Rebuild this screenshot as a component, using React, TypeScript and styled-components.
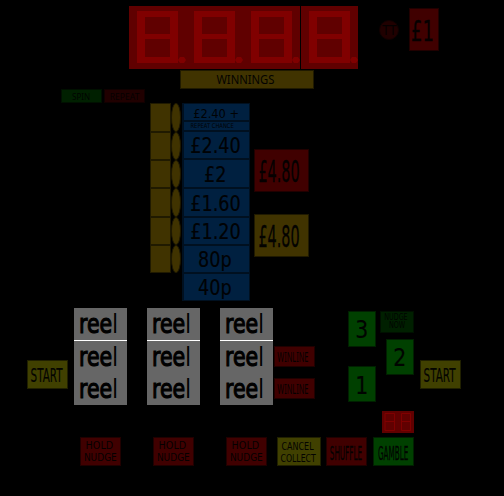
import React from "react";
import styled, { createGlobalStyle } from "styled-components";

const Global = createGlobalStyle`
  html, body { margin: 0; background: #000; }
  * { box-sizing: border-box; }
`;

const tones = {
  red: ["#400000", "#200000", "#050000"],
  dimRed: ["#200000", "#100000", "#050000"],
  gold: ["#403300", "#201a00", "#040300"],
  yellow: ["#404000", "#202000", "#040400"],
  green: ["#004000", "#002000", "#000400"],
  dimGreen: ["#002000", "#001000", "#000400"],
  blue: ["#002040", "#001020", "#000204"],
};
type Tone = keyof typeof tones;

const Machine = styled.main`
  width: 504px;
  height: 496px;
  overflow: hidden;
  background: #000;
  display: flex;
  flex-direction: column;
  font-family: "DejaVu Sans", sans-serif;
`;

const Row = styled.div<{ $left?: number; $top?: number; $gap?: number; $h?: number }>`
  display: flex;
  flex: none;
  align-items: flex-start;
  margin-left: ${(p) => p.$left ?? 0}px;
  margin-top: ${(p) => p.$top ?? 0}px;
  gap: ${(p) => p.$gap ?? 0}px;
  ${(p) => p.$h && `height: ${p.$h}px;`}
`;

const Column = styled(Row)`
  flex-direction: column;
`;

const Lamp = styled.div<{ $tone: Tone; $w: number; $h: number }>`
  flex: none;
  display: flex;
  flex-direction: column;
  align-items: center;
  justify-content: center;
  width: ${(p) => p.$w}px;
  height: ${(p) => p.$h}px;
  color: ${(p) => tones[p.$tone][2]};
  background: ${(p) => tones[p.$tone][0]};
  border: 1px solid ${(p) => tones[p.$tone][1]};
`;

const RoundLamp = styled(Lamp)`
  border-radius: 50%;
`;

const PrizeLamp = styled(Lamp)`
  border-left-width: 2px;
`;

const Label = styled.span<{ $size: number; $sx?: number; $lh?: number; $noto?: boolean; $pad?: string; $bold?: number }>`
  flex: none;
  white-space: nowrap;
  font-size: ${(p) => p.$size}px;
  line-height: ${(p) => p.$lh ?? p.$size}px;
  padding: ${(p) => p.$pad ?? "0"};
  transform: scaleX(${(p) => p.$sx ?? 1});
  ${(p) => p.$noto && `font-family: "Noto Sans", sans-serif;`}
  ${(p) => p.$bold && `-webkit-text-stroke: ${p.$bold}px currentColor;`}
`;

const Readout = styled.div`
  display: flex;
  width: 229px;
  height: 63px;
`;

const DigitCell = styled.svg`
  display: block;
  flex: none;
  background: #600000;
  &:last-child { margin-left: 1px; }
`;

const Counter = styled.svg`
  display: block;
  flex: none;
  background: #600000;
`;

const Reel = styled.div`
  width: 53px;
  height: 97px;
  background: #666;
  color: #000;
  display: flex;
  flex-direction: column;
`;

const Symbol = styled.div<{ $line?: boolean }>`
  height: ${(p) => (p.$line ? 33 : 32)}px;
  border-bottom: ${(p) => (p.$line ? "1px solid #fff" : "none")};
  padding-left: 5px;
  font-size: 27px;
  line-height: 32px;
  white-space: nowrap;
`;

const Word = styled.span`
  display: inline-block;
  transform: scaleX(0.76);
  transform-origin: left;
`;

const Heavy = styled.span`
  -webkit-text-stroke: 1.2px #000;
`;

const Digit = () => (
  <DigitCell width="57" height="63" viewBox="0 0 57 63">
    <path d="M8 5H49V57H8ZM16 11V28H41V11ZM16 33V51H41V33Z" fill="#800000" fillRule="evenodd" />
    <path d="M49 54l2-3h4l2 3l-2 3h-4z" fill="#800000" />
  </DigitCell>
);

const ReelStrip = () => (
  <Reel>
    {[true, false, false].map((line, i) => (
      <Symbol key={i} $line={line}>
        <Word><Heavy>ree</Heavy>l</Word>
      </Symbol>
    ))}
  </Reel>
);

const Start = () => (
  <Lamp $tone="yellow" $w={41} $h={29}>
    <Label $size={20} $sx={0.52} $pad="0 3px 0 0" $bold={0.2}>START</Label>
  </Lamp>
);

const Hold = () => (
  <Lamp $tone="red" $w={41} $h={29}>
    <Label $size={10} $lh={12} $sx={0.96} $pad="1px 2px 0 0">HOLD</Label>
    <Label $size={10} $lh={12} $sx={0.9} $pad="0 1px 0 0">NUDGE</Label>
  </Lamp>
);

const prizes: [string, number][] = [
  ["£2.40", 28], ["£2", 29], ["£1.60", 29], ["£1.20", 28], ["80p", 28], ["40p", 28],
];

export default function App() {
  return (
    <Machine>
      <Global />
      <Row $left={129} $top={6} $h={64}>
        <Readout><Digit /><Digit /><Digit /><Digit /></Readout>
        <Column $left={21} $top={14}>
          <RoundLamp $tone="dimRed" $w={20} $h={20}>
            <Label $size={14} $sx={0.85}>TT</Label>
          </RoundLamp>
        </Column>
        <Column $left={10} $top={2}>
          <Lamp $tone="red" $w={30} $h={43}>
            <Label $size={29} $sx={0.62} $pad="3px 5px 0 0" $bold={0.3}>£1</Label>
          </Lamp>
        </Column>
      </Row>

      <Row $left={180}>
        <Lamp $tone="gold" $w={134} $h={19}>
          <Label $size={12.5} $sx={0.9} $noto $pad="1px 3px 0 0">WINNINGS</Label>
        </Lamp>
      </Row>

      <Row $left={61} $gap={2}>
        <Lamp $tone="dimGreen" $w={41} $h={14}><Label $size={9} $sx={0.9} $noto>SPIN</Label></Lamp>
        <Lamp $tone="dimRed" $w={41} $h={14}><Label $size={9} $sx={0.95} $noto>REPEAT</Label></Lamp>
      </Row>

      <Row $left={150} $h={198}>
        <Column>
          {[29, 28, 28, 29, 28, 28].map((h, i) => <Lamp key={i} $tone="gold" $w={21} $h={h} />)}
        </Column>
        <Column>
          {[29, 28, 28, 29, 28, 28].map((h, i) => <RoundLamp key={i} $tone="gold" $w={10} $h={h} />)}
        </Column>
        <Column $left={1}>
          <PrizeLamp $tone="blue" $w={68} $h={18}><Label $size={13} $sx={0.88} $pad="2px 0 0">£2.40 +</Label></PrizeLamp>
          <PrizeLamp $tone="blue" $w={68} $h={10}><Label $size={6.5} $sx={0.8} $pad="0 11px 0 0">REPEAT CHANCE</Label></PrizeLamp>
          {prizes.map(([text, h]) => (
            <PrizeLamp key={text} $tone="blue" $w={68} $h={h}>
              <Label $size={20.5} $sx={0.86} $pad="3px 3px 0 0" $bold={0.2}>{text}</Label>
            </PrizeLamp>
          ))}
        </Column>
        <Column $left={4} $top={46} $gap={22}>
          <Lamp $tone="red" $w={55} $h={43}><Label $size={30} $sx={0.48} $pad="2px 12px 0 0" $bold={0.3}>£4.80</Label></Lamp>
          <Lamp $tone="gold" $w={55} $h={43}><Label $size={30} $sx={0.48} $pad="2px 12px 0 0" $bold={0.3}>£4.80</Label></Lamp>
        </Column>
      </Row>

      <Row $top={7} $h={103}>
        <Column $left={27} $top={52}><Start /></Column>
        <Row $left={6} $gap={20}><ReelStrip /><ReelStrip /><ReelStrip /></Row>
        <Column $left={1} $top={38} $gap={11}>
          <Lamp $tone="red" $w={41} $h={21}><Label $size={14} $sx={0.53} $noto $pad="0 6px 0 0">WINLINE</Label></Lamp>
          <Lamp $tone="red" $w={41} $h={21}><Label $size={14} $sx={0.53} $noto $pad="0 6px 0 0">WINLINE</Label></Lamp>
        </Column>
        <Column $left={33} $top={3} $gap={19}>
          <Lamp $tone="green" $w={28} $h={36}><Label $size={24} $sx={0.85} $pad="2px 0 0" $bold={0.2}>3</Label></Lamp>
          <Lamp $tone="green" $w={28} $h={36}><Label $size={24} $sx={0.85} $pad="4px 0 0" $bold={0.2}>1</Label></Lamp>
        </Column>
        <Column $left={4} $top={3} $gap={6}>
          <Lamp $tone="dimGreen" $w={34} $h={22}>
            <Label $size={8} $lh={8} $sx={0.8} $pad="0 3px 0 0">NUDGE</Label>
            <Label $size={8} $lh={8} $sx={0.8}>NOW</Label>
          </Lamp>
          <Column $left={6}>
            <Lamp $tone="green" $w={28} $h={36}><Label $size={24} $sx={0.85} $pad="2px 0 0" $bold={0.2}>2</Label></Lamp>
          </Column>
        </Column>
        <Column $left={6} $top={52}><Start /></Column>
      </Row>

      <Row $left={382} $h={26}>
        <Counter width="32" height="22" viewBox="0 0 32 22">
          <path d="M3 2.5H12.5V19.5H3ZM3 10.5H12.5M19.5 2.5H28.5V19.5H19.5ZM19.5 10.5H28.5" fill="none" stroke="#800000" />
        </Counter>
      </Row>

      <Row $left={80}>
        <Row $gap={32}><Hold /><Hold /><Hold /></Row>
        <Row $left={10}>
          <Lamp $tone="yellow" $w={44} $h={29}>
            <Label $size={10.5} $lh={12} $sx={0.76} $pad="0 4px 0 0">CANCEL</Label>
            <Label $size={10.5} $lh={12} $sx={0.74} $pad="0 2px 0 0">COLLECT</Label>
          </Lamp>
        </Row>
        <Row $left={5} $gap={6}>
          <Lamp $tone="red" $w={41} $h={29}><Label $size={19} $sx={0.38} $pad="3px 5px 0 0" $bold={0.3}>SHUFFLE</Label></Lamp>
          <Lamp $tone="green" $w={41} $h={29}><Label $size={19} $sx={0.38} $pad="3px 4px 0 0" $bold={0.3}>GAMBLE</Label></Lamp>
        </Row>
      </Row>
    </Machine>
  );
}
